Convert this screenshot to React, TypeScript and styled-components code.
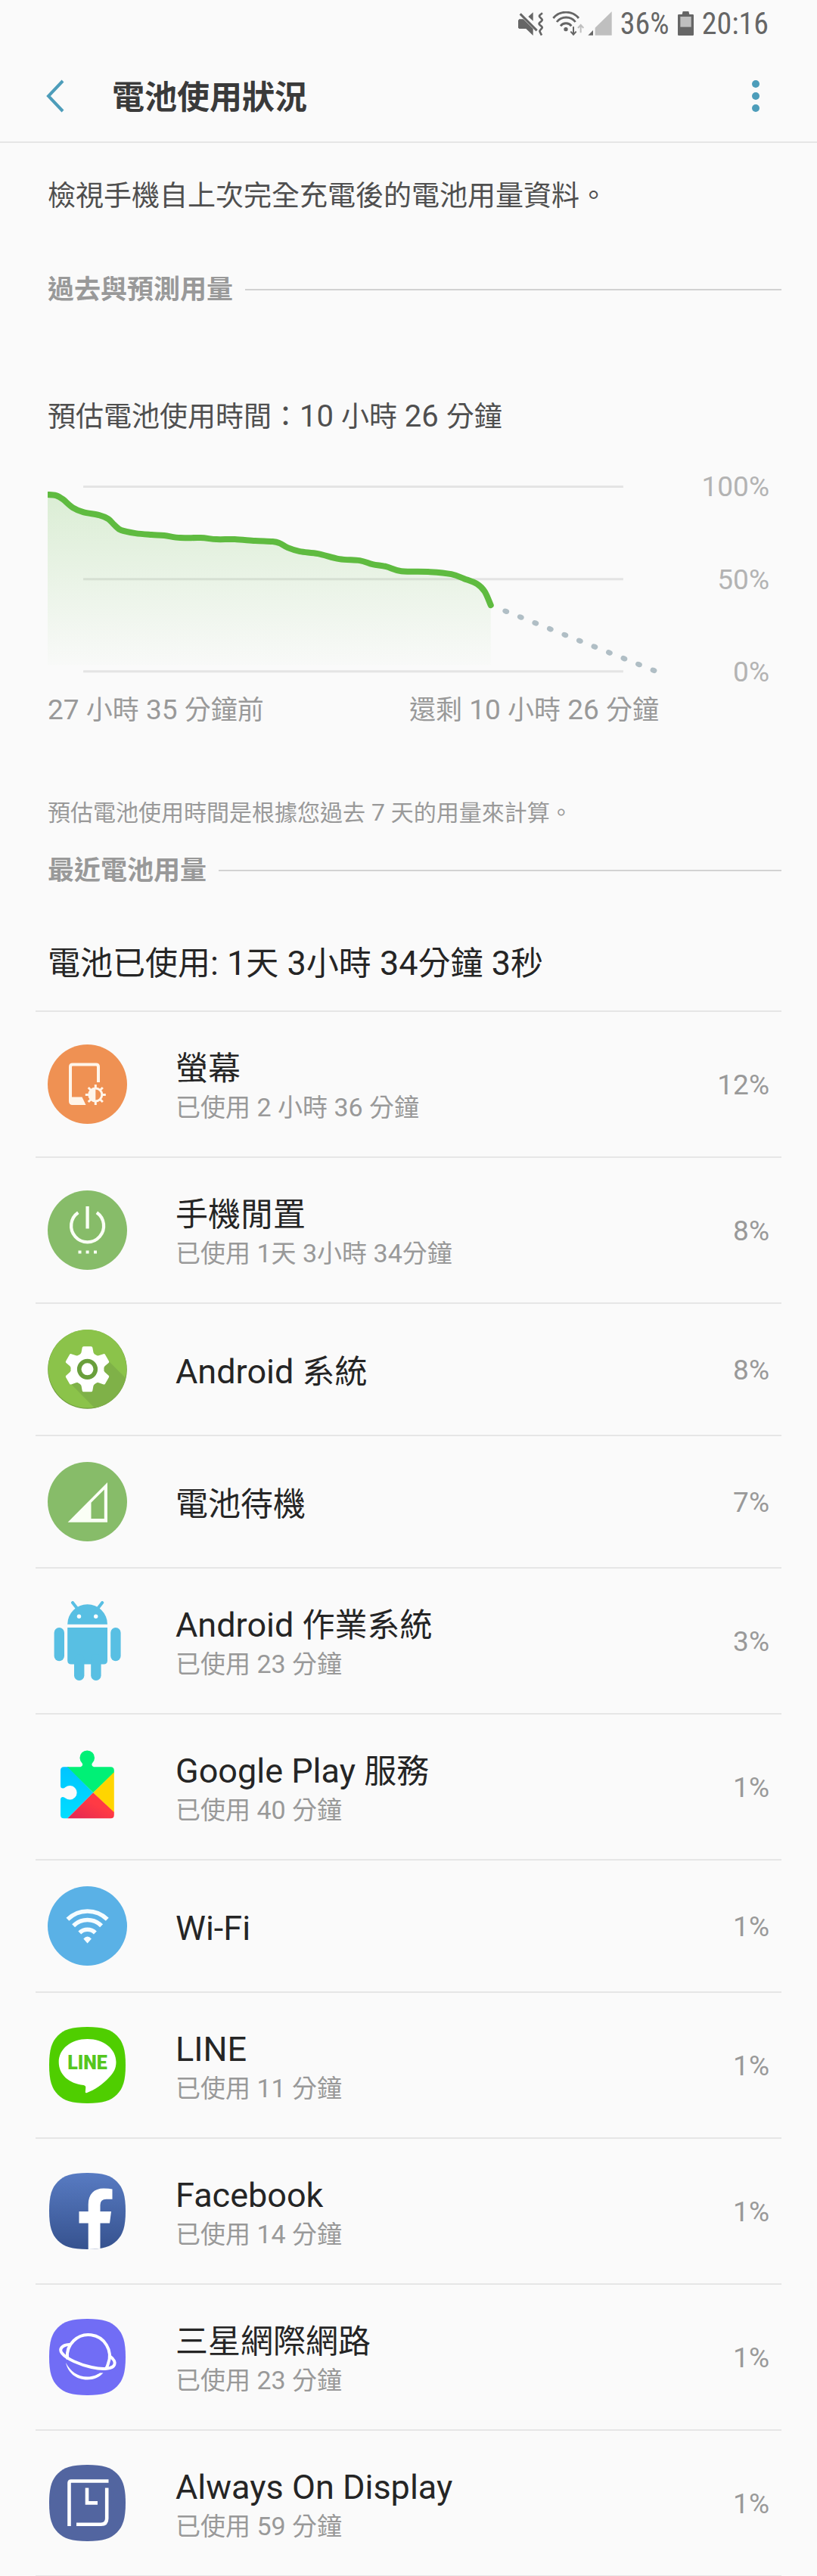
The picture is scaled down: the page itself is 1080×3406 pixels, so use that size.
import React from 'react';
import styled, { createGlobalStyle } from 'styled-components';

const SANS = `Roboto, 'Noto Sans CJK TC', sans-serif`;

const color = {
  page: '#fafafa',
  title: '#3a3a3a',
  strong: '#252525',
  body: '#4f4f4f',
  muted: '#999999',
  axis: '#b3b3b3',
  accent: '#4d9dba',
  rule: '#e6e6e6',
  sectionRule: '#d2d2d2',
  status: '#666666',
  statusLight: '#bfbfbf',
};

const GlobalStyle = createGlobalStyle`
  * { box-sizing: border-box; }
  body {
    margin: 0;
    background: ${color.page};
    font-family: ${SANS};
    font-size: 37px;
    color: ${color.body};
  }
  h1, h2, p, ul { margin: 0; padding: 0; }
  button { font: inherit; color: inherit; background: none; border: 0; padding: 0; cursor: pointer; }
  svg { display: block; flex: none; }
`;

/* ---------- mixed script text ---------- */

/* Latin runs are set slightly larger than the Chinese text around them. */
const Latin = styled.span`
  line-height: 1;
  white-space: pre-wrap;
`;

const Mixed = ({ text }: { text: string }) => (
  <>
    {text
      .split(/([\x20-\x7e]+)/)
      .filter(Boolean)
      .map((run, i) => (/^[\x20-\x7e]/.test(run) ? <Latin key={i}>{run}</Latin> : run))}
  </>
);

/* ---------- status bar ---------- */

const StatusBar = styled.div`
  display: flex;
  justify-content: flex-end;
  align-items: center;
  gap: 11px;
  height: 66px;
  padding: 0 64px 3px;
  color: ${color.status};
`;

const StatusText = styled.span`
  font-family: 'Roboto Condensed', 'Liberation Sans Narrow', Roboto, sans-serif;
  font-size: 40px;
  line-height: 44px;
`;

const Radios = styled.div`
  display: flex;
  align-items: center;
  gap: 4px;
`;

const MuteIcon = () => (
  <svg width="34" height="33" viewBox="72 43 102 99">
    <path d="M72 79l4-5h16l5 4 34 34v27l-28-27H76l-4-4z" fill={color.status} />
    <path d="M131 47v34l-19-17z" fill={color.status} />
    <path d="M80 53l66 66" stroke={color.status} strokeWidth="9" />
    <path
      d="M168 50l-10 8q-4 4 0 8l7 7q4 4 0 8l-8 7q-4 4 0 8l8 7q4 4 0 8l-6 7q-3 4 0 8l6 12"
      fill="none"
      stroke={color.status}
      strokeWidth="8"
    />
  </svg>
);

const WifiStatusIcon = () => (
  <svg width="43" height="33" viewBox="213 43 129 99">
    <g fill="none" stroke={color.status} strokeWidth="8.500">
      <path d="M217 70a66 66 0 0 1 101 0" />
      <path d="M231 85a47 47 0 0 1 74 0" />
      <path d="M246 101a27 27 0 0 1 43 0" />
      <path d="M297 104v31M286 123l11 12 11-12" strokeWidth="6" />
      <path d="M326 128V97M315 109l11-12 11 12" stroke={color.statusLight} strokeWidth="6" />
    </g>
    <circle cx="267" cy="114" r="8" fill={color.status} />
  </svg>
);

const SignalStatusIcon = () => (
  <svg width="32" height="33" viewBox="355 43 96 99">
    <path d="M356 138l20-20v20z" fill={color.status} />
    <path d="M384 138v-30l66-64v94z" fill={color.statusLight} />
  </svg>
);

const BatteryStatusIcon = () => (
  <svg width="21" height="33" viewBox="714 43 63 99">
    <path d="M718 55h13l3-12h23l3 12h13q4 0 4 4v76q0 4-4 4h-55q-4 0-4-4V59q0-4 4-4z" fill={color.status} />
    <path d="M724 64h43v41h-43z" fill={color.statusLight} />
  </svg>
);

/* ---------- app bar ---------- */

const AppBar = styled.header`
  display: flex;
  align-items: center;
  height: 123px;
  padding: 0 64px 0 50px;
  border-bottom: 2px solid ${color.rule};
  color: ${color.accent};
`;

const PageTitle = styled.h1`
  flex: 1;
  margin-left: 53px;
  padding-top: 4px;
  font-size: 43px;
  line-height: 56px;
  font-weight: 700;
  color: ${color.title};
`;

const IconButton = styled.button`
  display: flex;
  align-items: center;
  justify-content: center;
  width: 45px;
  height: 60px;
`;

const MoreButton = styled(IconButton)`
  width: 34px;
`;

/* ---------- content blocks ---------- */

const Content = styled.main`
  padding: 43px 47px 0;
`;

const Lead = styled.p`
  padding: 0 16px;
  font-size: 37px;
  line-height: 56px;

  ${Latin} { font-size: 40px; }
`;

const SectionTitle = styled.h2`
  display: flex;
  align-items: center;
  gap: 16px;
  padding: 2px 0 0 16px;
  font-size: 35px;
  line-height: 56px;
  font-weight: 700;
  color: ${color.muted};

  &::after {
    content: '';
    flex: 1;
    height: 2px;
    margin-bottom: 2px;
    background: ${color.sectionRule};
  }
`;

const History = styled.section`
  margin-top: 66px;
`;

const Estimate = styled(Lead)`
  margin-top: 112px;
`;

const ChartGrid = styled.div`
  display: grid;
  grid-template-columns: 1fr 146px;
  margin: 42px 16px 0;
`;

const Plot = styled.svg`
  width: 100%;
  height: auto;
`;

const Scale = styled.div`
  display: flex;
  flex-direction: column;
  justify-content: space-between;
  text-align: right;
  font-size: 37px;
  line-height: 44px;
  color: ${color.axis};
`;

const TimeAxis = styled.div`
  display: flex;
  justify-content: space-between;
  margin-top: 7px;
  font-size: 35px;
  line-height: 44px;
  color: ${color.muted};

  ${Latin} { font-size: 37px; }
`;

const Hint = styled.p`
  margin: 91px 0 25px;
  padding: 0 16px;
  font-size: 30px;
  line-height: 44px;
  color: ${color.muted};

  ${Latin} { font-size: 32px; }
`;

const Total = styled.p`
  margin-top: 66px;
  padding: 0 16px 34px;
  font-size: 43px;
  line-height: 56px;
  color: ${color.strong};
  border-bottom: 2px solid ${color.rule};

  ${Latin} { font-size: 45px; }
`;

/* ---------- usage list ---------- */

const UsageList = styled.ul`
  list-style: none;
`;

const UsageItem = styled.li`
  border-bottom: 2px solid ${color.rule};
`;

const UsageRow = styled.button<{ $tall: boolean }>`
  display: flex;
  align-items: center;
  width: 100%;
  height: ${(p) => (p.$tall ? 191 : 173)}px;
  padding: 0 16px;
  text-align: left;
`;

const Labels = styled.span`
  display: flex;
  flex: 1;
  flex-direction: column;
  margin-left: 64px;
  padding-top: 7px;
`;

const Name = styled.span`
  font-size: 43px;
  line-height: 56px;
  color: ${color.strong};

  ${Latin} { font-size: 45px; }
`;

const Detail = styled.span`
  font-size: 33px;
  line-height: 48px;
  color: ${color.muted};

  ${Latin} { font-size: 34px; }
`;

const Percent = styled.span`
  padding-top: 2px;
  font-size: 37px;
  line-height: 44px;
  color: ${color.muted};
`;

/* ---------- chart ---------- */

type Point = [number, number];

const history: Point[] = [
  [0, 32], [11, 33], [20, 38], [33, 49], [47, 55], [68, 59], [80, 64], [88, 72], [97, 79],
  [116, 83], [137, 85], [154, 86], [175, 89], [202, 89], [223, 91], [247, 91], [274, 93],
  [297, 94], [306, 96], [317, 102], [333, 107], [357, 110], [385, 117], [412, 119], [429, 124],
  [447, 127], [467, 133], [505, 134], [533, 137], [550, 143], [567, 150], [577, 160], [585, 178],
];

const smooth = (pts: Point[]) =>
  pts.reduce((d, p, i) => {
    if (i === 0) return `M${p[0]} ${p[1]}`;
    const a = pts[i - 2] ?? pts[i - 1];
    const b = pts[i - 1];
    const c = pts[i + 1] ?? p;
    const c1 = [b[0] + (p[0] - a[0]) / 6, b[1] + (p[1] - a[1]) / 6];
    const c2 = [p[0] - (c[0] - b[0]) / 6, p[1] - (c[1] - b[1]) / 6];
    return `${d}C${c1[0]} ${c1[1]} ${c2[0]} ${c2[1]} ${p[0]} ${p[1]}`;
  }, '');

const line = smooth(history);
const forecast = Array.from({ length: 11 }, (_, i) => [605 + i * 19.5, 186 + i * 7.8]);

const BatteryChart = () => (
  <Plot viewBox="0 0 807 289" role="img" aria-label="電池用量">
    <defs>
      <linearGradient id="area" gradientUnits="userSpaceOnUse" x1="0" y1="32" x2="0" y2="257">
        <stop offset="0" stopColor="#5fbb40" stopOpacity="0.2" />
        <stop offset="1" stopColor="#5fbb40" stopOpacity="0.01" />
      </linearGradient>
    </defs>
    <path d="M47 21.500H760M47 143.500H760M47 265.500H760" stroke="#e4e4e4" strokeWidth="3" />
    <path d={`${line}V257H0Z`} fill="url(#area)" />
    <path d={line} fill="none" stroke="#5fbb40" strokeWidth="8" strokeLinecap="round" />
    {forecast.map(([x, y]) => (
      <ellipse key={x} cx={x} cy={y} rx="4.500" ry="3.500" fill="#b0bec5" transform={`rotate(22 ${x} ${y})`} />
    ))}
  </Plot>
);

/* ---------- app icons (105 unit box) ---------- */

const Icon = ({ children }: { children: React.ReactNode }) => (
  <svg width="105" height="105" viewBox="0 0 105 105" aria-hidden="true">
    {children}
  </svg>
);

const Disc = ({ fill }: { fill: string }) => <circle cx="52.500" cy="52.500" r="52.500" fill={fill} />;

const SQUIRCLE =
  'M52.500 2C73 2 83.500 5.500 91.500 13.500C99.500 21.500 103 32 103 52.500C103 73 99.500 83.500 91.500 91.500C83.500 99.500 73 103 52.500 103C32 103 21.500 99.500 13.500 91.500C5.500 83.500 2 73 2 52.500C2 32 5.500 21.500 13.500 13.500C21.500 5.500 32 2 52.500 2Z';

const ScreenIcon = () => (
  <Icon>
    <Disc fill="#ef9153" />
    <path d="M67 50V29.500q0-3-3-3H33q-3 0-3 3V75q0 3 3 3h14" fill="none" stroke="#fff5ea" strokeWidth="4" />
    <path d="M30 69.500h15.500l5 10.500H34q-4 0-4-4z" fill="#fff5ea" />
    <circle cx="63.300" cy="66.500" r="8.500" fill="none" stroke="#fff5ea" strokeWidth="3" />
    <path d="M63.300 57a9.500 9.500 0 0 0 0 19z" fill="#fff5ea" />
    {[0, 45, 90, 135, 180, 225, 270, 315].map((a) => (
      <path key={a} d="M63.300 58v-5" stroke="#fff5ea" strokeWidth="3" transform={`rotate(${a} 63.300 66.500)`} />
    ))}
  </Icon>
);

const IdleIcon = () => (
  <Icon>
    <Disc fill="#87bc69" />
    <path d="M40.300 29.200a21.500 21.500 0 1 0 24.600 0M52.600 21v29.500" fill="none" stroke="#fafff5" strokeWidth="4.300" />
    <path d="M40.500 79.500h4v4h-4zM50.600 79.500h4v4h-4zM61 79.500h4v4h-4z" fill="#fafff5" />
  </Icon>
);

const SystemIcon = () => (
  <Icon>
    <clipPath id="disc">
      <circle cx="52.500" cy="52.500" r="52" />
    </clipPath>
    <circle cx="52.500" cy="52.500" r="52.300" fill="#6d9a3c" />
    <circle cx="52.500" cy="51.800" r="51.800" fill="#8bc34a" />
    <path d="M31 72L78 39l47 47v40H84z" fill="#7fb148" clipPath="url(#disc)" />
    <circle cx="52.500" cy="52.300" r="22" fill="#fff" />
    {[0, 60, 120, 180, 240, 300].map((a) => (
      <path
        key={a}
        d="M47.500 22.300h10q1.500 0 1.800 1.500l1.200 6.500q1 3 4 4.500h-24q3-1.500 4-4.500l1.200-6.500q.3-1.500 1.800-1.500z"
        fill="#fff"
        transform={`rotate(${a} 52.500 52.300)`}
      />
    ))}
    <circle cx="52.500" cy="52.300" r="10.800" fill="none" stroke="#6a9f3c" strokeWidth="5.600" />
  </Icon>
);

const StandbyIcon = () => (
  <Icon>
    <Disc fill="#87bc69" />
    <path d="M26.600 79.700L79 27v52.700zM57.500 53.700V75h17.300V36.500z" fill="#fafff5" fillRule="evenodd" />
  </Icon>
);

const RobotIcon = () => (
  <Icon>
    <g fill="#58bfe3">
      <path d="M26.200 30.700a26.400 26.400 0 0 1 52.800 0z" />
      <path d="M26.200 35H79v43.500q0 5-5 5H31.200q-5 0-5-5z" />
      <rect x="8.600" y="35" width="13.400" height="44.300" rx="6.700" />
      <rect x="83.200" y="35" width="13.400" height="44.300" rx="6.700" />
      <rect x="35" y="70" width="13.400" height="35" rx="6.700" />
      <rect x="57.200" y="70" width="13.400" height="35" rx="6.700" />
    </g>
    <path d="M33 2l7 9M72.200 2l-7 9" stroke="#58bfe3" strokeWidth="4" strokeLinecap="round" />
    <circle cx="41.500" cy="20.300" r="2.700" fill="#fff" />
    <circle cx="63.700" cy="20.300" r="2.700" fill="#fff" />
  </Icon>
);

const PlayServicesIcon = () => (
  <Icon>
    <defs>
      <linearGradient id="playBlue" x1="0" y1="0" x2="0" y2="1">
        <stop offset="0" stopColor="#00bdff" />
        <stop offset="1" stopColor="#00e4ff" />
      </linearGradient>
      <linearGradient id="playRed" x1="1" y1="0" x2="0" y2="1">
        <stop offset="0.400" stopColor="#ff3a44" />
        <stop offset="1" stopColor="#dc2457" />
      </linearGradient>
      <clipPath id="puzzle">
        <path d="M21.500 26.300h22q4-2 2-5a9.800 9.800 0 1 1 13.500 0q-2 3 2 5h22.300q4.500 0 4.500 4.500v59q0 4.500-4.500 4.500H21.500q-4.500 0-4.500-4.500V69.500q0-3.500 3-3.500 2 0 3.500 1.500a9.300 9.300 0 1 0 0-14.500q-1.500 1.500-3.500 1.500-3 0-3-3.500V30.800q0-4.500 4.500-4.500z" />
      </clipPath>
    </defs>
    <g clipPath="url(#puzzle)">
      <path d="M10 8L60.200 60.200 26.200 94.300 10 110z" fill="url(#playBlue)" />
      <path d="M26.200 26.300V0H90v32L60.200 60.200z" fill="#00f076" />
      <path d="M60.200 60.200L90 31v58z" fill="#ffd500" />
      <path d="M60.200 60.200L90 88v10H22.500z" fill="url(#playRed)" />
    </g>
  </Icon>
);

const WifiIcon = () => (
  <Icon>
    <Disc fill="#5ab1e6" />
    <g fill="none" stroke="#f5fcff" strokeWidth="5.500">
      <path d="M26.400 43.800a37 37 0 0 1 52.400 0" />
      <path d="M34.100 52.300a26 26 0 0 1 37 0" />
      <path d="M42.300 61.500a14.500 14.500 0 0 1 20.600 0" />
    </g>
    <path d="M47.300 69.500q5.300-6 10.600 0L52.600 75.500z" fill="#f5fcff" />
  </Icon>
);

const LineLogoText = styled.text`
  font-family: Roboto, sans-serif;
  font-size: 25px;
  font-weight: 900;
  fill: #55c61e;
`;

const LineIcon = () => (
  <Icon>
    <path d={SQUIRCLE} fill="#4fce00" />
    <path
      d="M52.600 18C74 18 90.500 31 90.500 48.500C90.500 57 87 63 81 69C73 77.500 62 85.500 51.500 89.200Q49.500 89.800 49.800 87.500L50.300 82Q50.300 79.500 47.500 79C28 77 14.700 65 14.700 48.500C14.700 31 31 18 52.600 18Z"
      fill="#fff"
    />
    <LineLogoText x="52.500" y="58" textAnchor="middle">LINE</LineLogoText>
  </Icon>
);

const FacebookIcon = () => (
  <Icon>
    <defs>
      <linearGradient id="fb" x1="0" y1="0" x2="0" y2="1">
        <stop offset="0" stopColor="#587bc2" />
        <stop offset="1" stopColor="#36528f" />
      </linearGradient>
      <clipPath id="fbClip">
        <path d={SQUIRCLE} />
      </clipPath>
    </defs>
    <path d={SQUIRCLE} fill="url(#fb)" />
    <path
      d="M53.700 105V68.500H41.500V53h12.200V44C53.700 30 61.500 22.600 74 22.600q7 0 11.500.8v13.400h-8q-8 0-8 7.700V53H84l-2 15.500H69.500V105z"
      fill="#fff"
      clipPath="url(#fbClip)"
    />
  </Icon>
);

const BrowserIcon = () => (
  <Icon>
    <path d={SQUIRCLE} fill="#716df5" />
    <g fill="none" stroke="#fff" strokeWidth="4" strokeLinecap="round">
      <path d="M26 54A28 28 0 1 1 80 61Q79 65 77.500 67" />
      <path d="M28.500 36C19 36.500 14.500 42 19 47.500C25 55 42 62.500 58 66C73 69.300 86 68.500 88.300 62.500C89.800 58.500 86.500 54.500 82 51" />
    </g>
    <path d="M24 60C30 71 39 78.500 52.600 78.500C60 78.500 65 76 69 73.500H73.500C68 79.500 61 82.500 52.600 82.500C37 82.500 27 73 24 60Z" fill="#fff" />
  </Icon>
);

const AlwaysOnIcon = () => (
  <Icon>
    <path d={SQUIRCLE} fill="#5265a0" />
    <g fill="none" stroke="#fff" strokeWidth="4.600">
      <path d="M28.500 83V26q0-2.500 2.500-2.500h49.500" />
      <path d="M78.200 32.600V73q0 7.700-7.700 7.700H38" />
      <path d="M52 32.600v19.800h14" />
    </g>
  </Icon>
);

/* ---------- data ---------- */

interface Usage {
  name: string;
  detail?: string;
  percent: number;
  icon: () => React.ReactElement;
}

const usages: Usage[] = [
  { name: '螢幕', detail: '已使用 2 小時 36 分鐘', percent: 12, icon: ScreenIcon },
  { name: '手機閒置', detail: '已使用 1天 3小時 34分鐘', percent: 8, icon: IdleIcon },
  { name: 'Android 系統', percent: 8, icon: SystemIcon },
  { name: '電池待機', percent: 7, icon: StandbyIcon },
  { name: 'Android 作業系統', detail: '已使用 23 分鐘', percent: 3, icon: RobotIcon },
  { name: 'Google Play 服務', detail: '已使用 40 分鐘', percent: 1, icon: PlayServicesIcon },
  { name: 'Wi-Fi', percent: 1, icon: WifiIcon },
  { name: 'LINE', detail: '已使用 11 分鐘', percent: 1, icon: LineIcon },
  { name: 'Facebook', detail: '已使用 14 分鐘', percent: 1, icon: FacebookIcon },
  { name: '三星網際網路', detail: '已使用 23 分鐘', percent: 1, icon: BrowserIcon },
  { name: 'Always On Display', detail: '已使用 59 分鐘', percent: 1, icon: AlwaysOnIcon },
];

export default function App() {
  return (
    <div lang="zh-TW">
      <GlobalStyle />
      <StatusBar>
        <MuteIcon />
        <Radios>
          <WifiStatusIcon />
          <SignalStatusIcon />
        </Radios>
        <StatusText>36%</StatusText>
        <BatteryStatusIcon />
        <StatusText>20:16</StatusText>
      </StatusBar>

      <AppBar>
        <IconButton type="button" aria-label="返回">
          <svg width="26" height="44" viewBox="0 0 26 44">
            <path d="M23 2L4 22l19 20" fill="none" stroke="currentColor" strokeWidth="4" />
          </svg>
        </IconButton>
        <PageTitle>電池使用狀況</PageTitle>
        <MoreButton type="button" aria-label="更多選項">
          <svg width="10" height="42" viewBox="0 0 10 42" fill="currentColor">
            <circle cx="5" cy="5" r="5" />
            <circle cx="5" cy="21" r="5" />
            <circle cx="5" cy="37" r="5" />
          </svg>
        </MoreButton>
      </AppBar>

      <Content>
        <Lead>檢視手機自上次完全充電後的電池用量資料。</Lead>

        <History>
          <SectionTitle>過去與預測用量</SectionTitle>
          <Estimate>
            <Mixed text="預估電池使用時間：10 小時 26 分鐘" />
          </Estimate>
          <ChartGrid>
            <BatteryChart />
            <Scale>
              <span>100%</span>
              <span>50%</span>
              <span>0%</span>
            </Scale>
            <TimeAxis>
              <span>
                <Mixed text="27 小時 35 分鐘前" />
              </span>
              <span>
                <Mixed text="還剩 10 小時 26 分鐘" />
              </span>
            </TimeAxis>
          </ChartGrid>
          <Hint>
            <Mixed text="預估電池使用時間是根據您過去 7 天的用量來計算。" />
          </Hint>
        </History>

        <section>
          <SectionTitle>最近電池用量</SectionTitle>
          <Total>
            <Mixed text="電池已使用: 1天 3小時 34分鐘 3秒" />
          </Total>
          <UsageList>
            {usages.map(({ name, detail, percent, icon: AppIcon }) => (
              <UsageItem key={name}>
                <UsageRow type="button" $tall={Boolean(detail)}>
                  <AppIcon />
                  <Labels>
                    <Name>
                      <Mixed text={name} />
                    </Name>
                    {detail && (
                      <Detail>
                        <Mixed text={detail} />
                      </Detail>
                    )}
                  </Labels>
                  <Percent>{percent}%</Percent>
                </UsageRow>
              </UsageItem>
            ))}
          </UsageList>
        </section>
      </Content>
    </div>
  );
}
